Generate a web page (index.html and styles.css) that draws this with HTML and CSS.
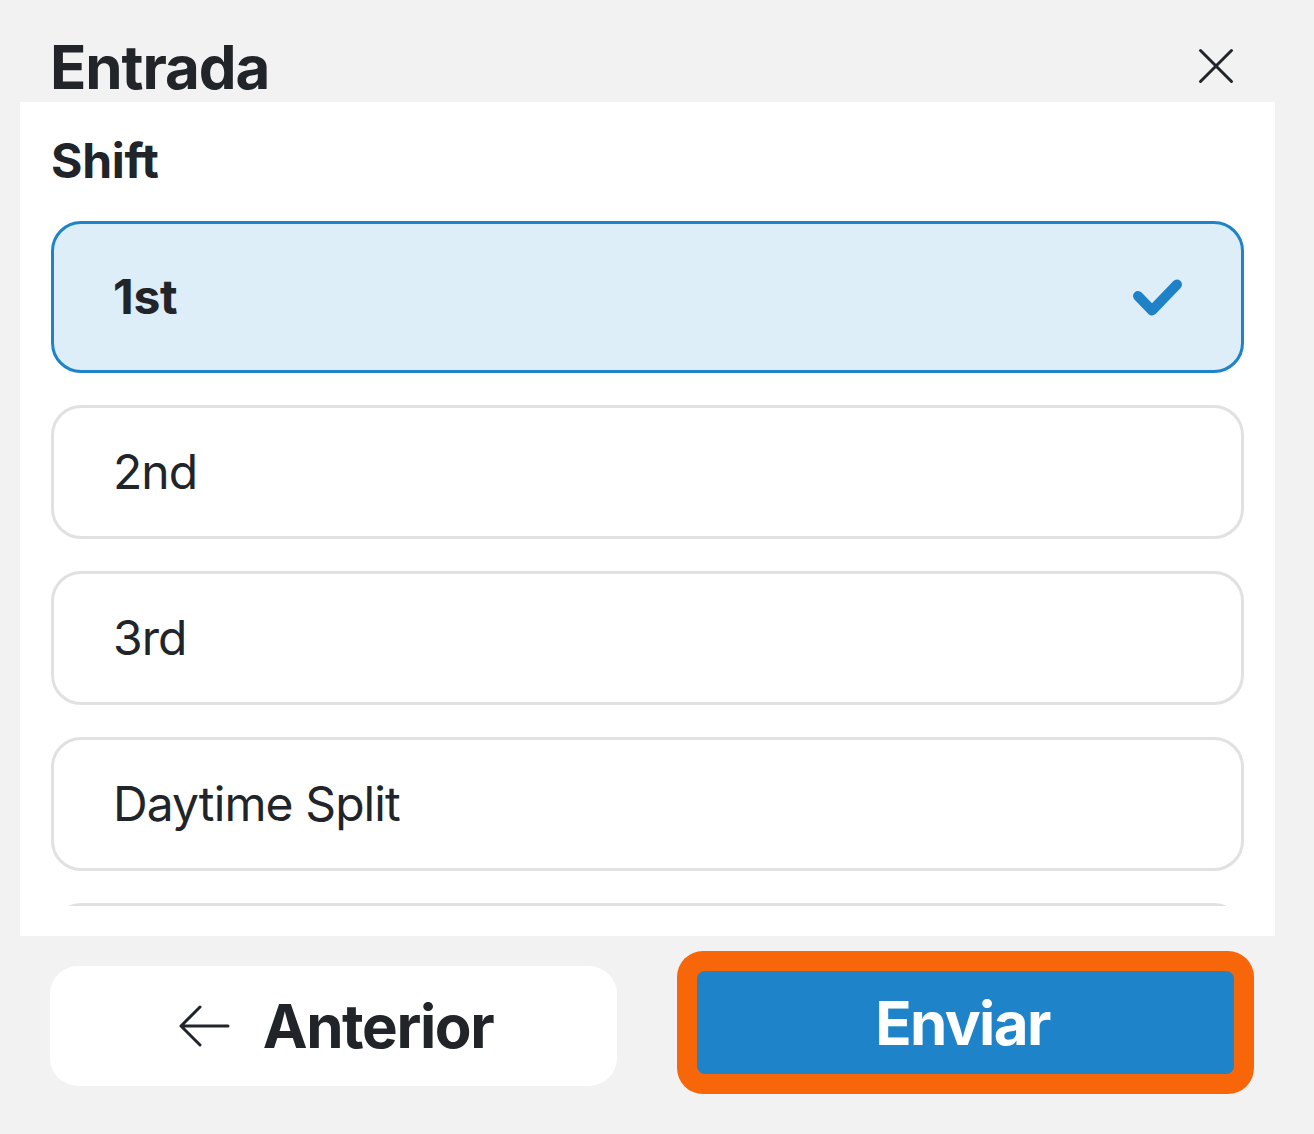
FILE: index.html
```html
<!DOCTYPE html>
<html lang="pt">
<head>
<meta charset="utf-8">
<title>Entrada</title>
<link rel="stylesheet" href="styles.css">
</head>
<body>
<div class="screen">
  <header class="header">
    <h1 class="title">Entrada</h1>
    <button class="close" aria-label="Fechar">
      <svg width="36" height="36" viewBox="0 0 36 36"><path d="M2.5 2.5 L33.5 33.5 M33.5 2.5 L2.5 33.5" stroke="#212529" stroke-width="3" stroke-linecap="round" fill="none"/></svg>
    </button>
  </header>
  <section class="panel">
    <div class="label">Shift</div>
    <div class="list">
      <div class="option selected">
        <span>1st</span>
        <svg class="check" width="54" height="46" viewBox="0 0 54 46"><path d="M7 22 L21 36.5 L46 10.5" stroke="#1f82c7" stroke-width="10" stroke-linecap="round" stroke-linejoin="round" fill="none"/></svg>
      </div>
      <div class="option"><span>2nd</span></div>
      <div class="option"><span>3rd</span></div>
      <div class="option"><span>Daytime Split</span></div>
      <div class="option" aria-hidden="true"></div>
    </div>
  </section>
  <footer class="footer">
    <button class="btn-back">
      <svg width="52" height="44" viewBox="0 0 52 44"><path d="M3 22 L50 22 M22 3 L3 22 L22 41" stroke="#212529" stroke-width="3" stroke-linecap="round" stroke-linejoin="round" fill="none"/></svg>
      <span>Anterior</span>
    </button>
    <div class="focus-ring">
      <button class="btn-submit">Enviar</button>
    </div>
  </footer>
</div>
</body>
</html>
```

FILE: styles.css
```css
* { box-sizing: border-box; }
html, body {
  margin: 0;
  padding: 0;
  background: #f2f2f2;
  font-family: Inter, "Noto Sans", "Liberation Sans", sans-serif;
  color: #212529;
}
.screen {
  width: 1314px;
  height: 1134px;
  overflow: hidden;
}
.header {
  height: 102px;
  padding: 31px 80px 0 50px;
  display: flex;
  justify-content: space-between;
  align-items: flex-start;
}
.title {
  margin: 0;
  font-size: 60px;
  line-height: 72px;
  font-weight: 700;
  letter-spacing: -1.1px;
}
.close {
  margin-top: 17px;
  padding: 0;
  border: 0;
  background: none;
  width: 36px;
  height: 36px;
  display: block;
}
.close svg { display: block; }
.panel {
  margin: 0 39px 0 20px;
  background: #ffffff;
  padding: 30px 31px 30px 31px;
}
.label {
  font-size: 48px;
  font-weight: 700;
  line-height: 58px;
  margin: 0 0 31px 0;
  letter-spacing: -0.3px;
}
.list {
  height: 685px;
  overflow: hidden;
  display: flex;
  flex-direction: column;
  gap: 32px;
}
.option {
  flex: none;
  height: 134px;
  border: 3px solid #e1e1e1;
  border-radius: 30px;
  padding: 0 56px 0 59px;
  display: flex;
  align-items: center;
  justify-content: space-between;
  font-size: 48px;
  line-height: 58px;
  font-weight: 400;
  letter-spacing: -0.9px;
  background: #ffffff;
}
.option.selected {
  height: 152px;
  background: #ddeef9;
  border-color: #1e83c8;
  font-weight: 700;
  letter-spacing: -0.3px;
}
.check { display: block; }
.footer {
  display: flex;
  align-items: flex-start;
  padding: 15px 0 0 50px;
}
.btn-back {
  margin-top: 15px;
  width: 567px;
  height: 120px;
  border: 0;
  border-radius: 28px;
  background: #ffffff;
  display: flex;
  align-items: center;
  justify-content: center;
  gap: 33px;
  padding: 0 0 0 4px;
  font-family: inherit;
  font-size: 60px;
  font-weight: 700;
  color: #212529;
  letter-spacing: -1.4px;
}
.btn-back svg { display: block; }
.focus-ring {
  margin-left: 60px;
  width: 577px;
  height: 143px;
  padding: 20px;
  background: #f7670a;
  border-radius: 26px;
}
.btn-submit {
  display: block;
  width: 100%;
  height: 100%;
  border: 0;
  border-radius: 8px;
  background: #1e83c8;
  color: #ffffff;
  font-family: inherit;
  font-size: 60px;
  font-weight: 700;
  letter-spacing: -1.6px;
  padding: 0 6px 0 0;
}
```
